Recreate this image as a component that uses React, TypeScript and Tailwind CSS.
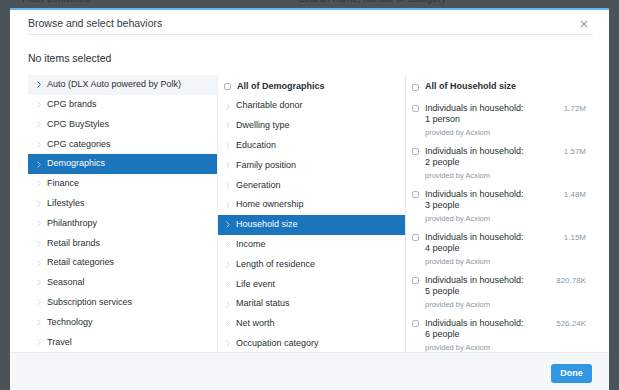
import React from "react";

const col1 = [
  "Auto (DLX Auto powered by Polk)",
  "CPG brands",
  "CPG BuyStyles",
  "CPG categories",
  "Demographics",
  "Finance",
  "Lifestyles",
  "Philanthropy",
  "Retail brands",
  "Retail categories",
  "Seasonal",
  "Subscription services",
  "Technology",
  "Travel",
];

const col2 = [
  "Charitable donor",
  "Dwelling type",
  "Education",
  "Family position",
  "Generation",
  "Home ownership",
  "Household size",
  "Income",
  "Length of residence",
  "Life event",
  "Marital status",
  "Net worth",
  "Occupation category",
];

const col3 = [
  ["1 person", "1.72M"],
  ["2 people", "1.57M"],
  ["3 people", "1.48M"],
  ["4 people", "1.15M"],
  ["5 people", "820.78K"],
  ["6 people", "526.24K"],
];

function Chevron({ color }: { color: string }) {
  return (
    <svg width="4" height="7" viewBox="0 0 4 7" className="shrink-0">
      <path d="M0.6 0.6 L3.3 3.5 L0.6 6.4" fill="none" stroke={color} strokeWidth="1" />
    </svg>
  );
}

function Checkbox() {
  return <span className="inline-block w-[7px] h-[7px] rounded-[2px] border border-[#aab8c2] bg-white shrink-0" />;
}

export default function App() {
  return (
    <div
      className="w-[619px] h-[390px] bg-[#4b5358] overflow-hidden flex flex-col"
      style={{ fontFamily: '"Liberation Sans", Arial, sans-serif' }}
    >
      <div className="h-[8px] shrink-0 overflow-hidden flex text-[10px] text-[#2e3337] leading-[10px]">
        <span className="ml-[22px] -mt-[6px]">Filter behaviors</span>
        <span className="ml-[208px] -mt-[6px]">Search name, handle or category</span>
      </div>
      <div className="mx-[10px] flex-1 bg-white border-t-2 border-[#62b6f0] flex flex-col overflow-hidden">
        <div className="ml-[18px] mr-[16px] h-[25px] shrink-0 pt-[3px] border-b border-[#e1e8ed] flex items-center justify-between">
          <span className="text-[10.5px] text-[#333a3f]">Browse and select behaviors</span>
          <svg width="8" height="8" viewBox="0 0 8 8" className="mr-[5px]">
            <path d="M1 1 L7 7 M7 1 L1 7" stroke="#9aa6b0" strokeWidth="1.2" />
          </svg>
        </div>
        <div className="h-[40px] shrink-0 pt-[7px] ml-[18px] flex items-center text-[10.5px] text-[#292f33]">
          No items selected
        </div>
        <div className="ml-[18px] flex h-[277px] shrink-0 text-[9px] text-[#292f33]">
          <div className="w-[189px] flex flex-col">
            {col1.map((c, i) => {
              const sel = i === 4;
              const hov = i === 0;
              return (
                <div
                  key={c}
                  className={
                    "h-[19.8px] shrink-0 flex items-center pl-[9px] gap-[6px] " +
                    (sel ? "bg-[#1b75bc] text-white" : hov ? "bg-[#f2f6f9]" : "")
                  }
                >
                  <Chevron color={sel ? "#a9cdea" : hov ? "#1d5f9f" : "#ccd6dd"} />
                  <span>{c}</span>
                </div>
              );
            })}
          </div>
          <div className="w-[188px] flex flex-col pt-[1.5px] border-l border-[#eef1f4] overflow-hidden">
            <div className="h-[19.8px] shrink-0 flex items-center pl-[6px] gap-[6px] font-bold">
              <Checkbox />
              <span>All of Demographics</span>
            </div>
            {col2.map((c) => {
              const sel = c === "Household size";
              return (
                <div
                  key={c}
                  className={
                    "h-[19.8px] shrink-0 flex items-center pl-[8px] gap-[6px] " +
                    (sel ? "bg-[#1b75bc] text-white" : "")
                  }
                >
                  <Chevron color={sel ? "#a9cdea" : "#ccd6dd"} />
                  <span>{c}</span>
                </div>
              );
            })}
          </div>
          <div className="w-[189px] flex flex-col pt-[2px] border-l border-[#e1e8ed] pr-[8px] overflow-hidden">
            <div className="h-[20px] shrink-0 flex items-center pl-[6px] gap-[6px] font-bold">
              <Checkbox />
              <span>All of Household size</span>
            </div>
            <div className="mt-[5.5px] shrink-0 flex flex-col">
              {col3.map(([p, n]) => (
                <div key={p} className="h-[43.2px] shrink-0 flex pl-[6px]">
                  <div className="h-[11px] flex items-center">
                    <Checkbox />
                  </div>
                  <div className="ml-[6px] flex-1 flex flex-col">
                    <div className="flex justify-between leading-[11px]">
                      <span>Individuals in household:</span>
                      <span className="text-[8px] text-[#8899a6]">{n}</span>
                    </div>
                    <div className="leading-[11px]">{p}</div>
                    <div className="mt-[2px] leading-[11px] text-[7.5px] text-[#8899a6]">provided by Acxiom</div>
                  </div>
                </div>
              ))}
            </div>
          </div>
        </div>
        <div className="flex-1 bg-[#f5f8fa] border-t border-[#e8edf1] flex justify-end pr-[17px] pt-[11px]">
          <button className="w-[41px] h-[19px] rounded-[3px] bg-[#3197e2] text-white text-[9px] font-bold">
            Done
          </button>
        </div>
      </div>
    </div>
  );
}
